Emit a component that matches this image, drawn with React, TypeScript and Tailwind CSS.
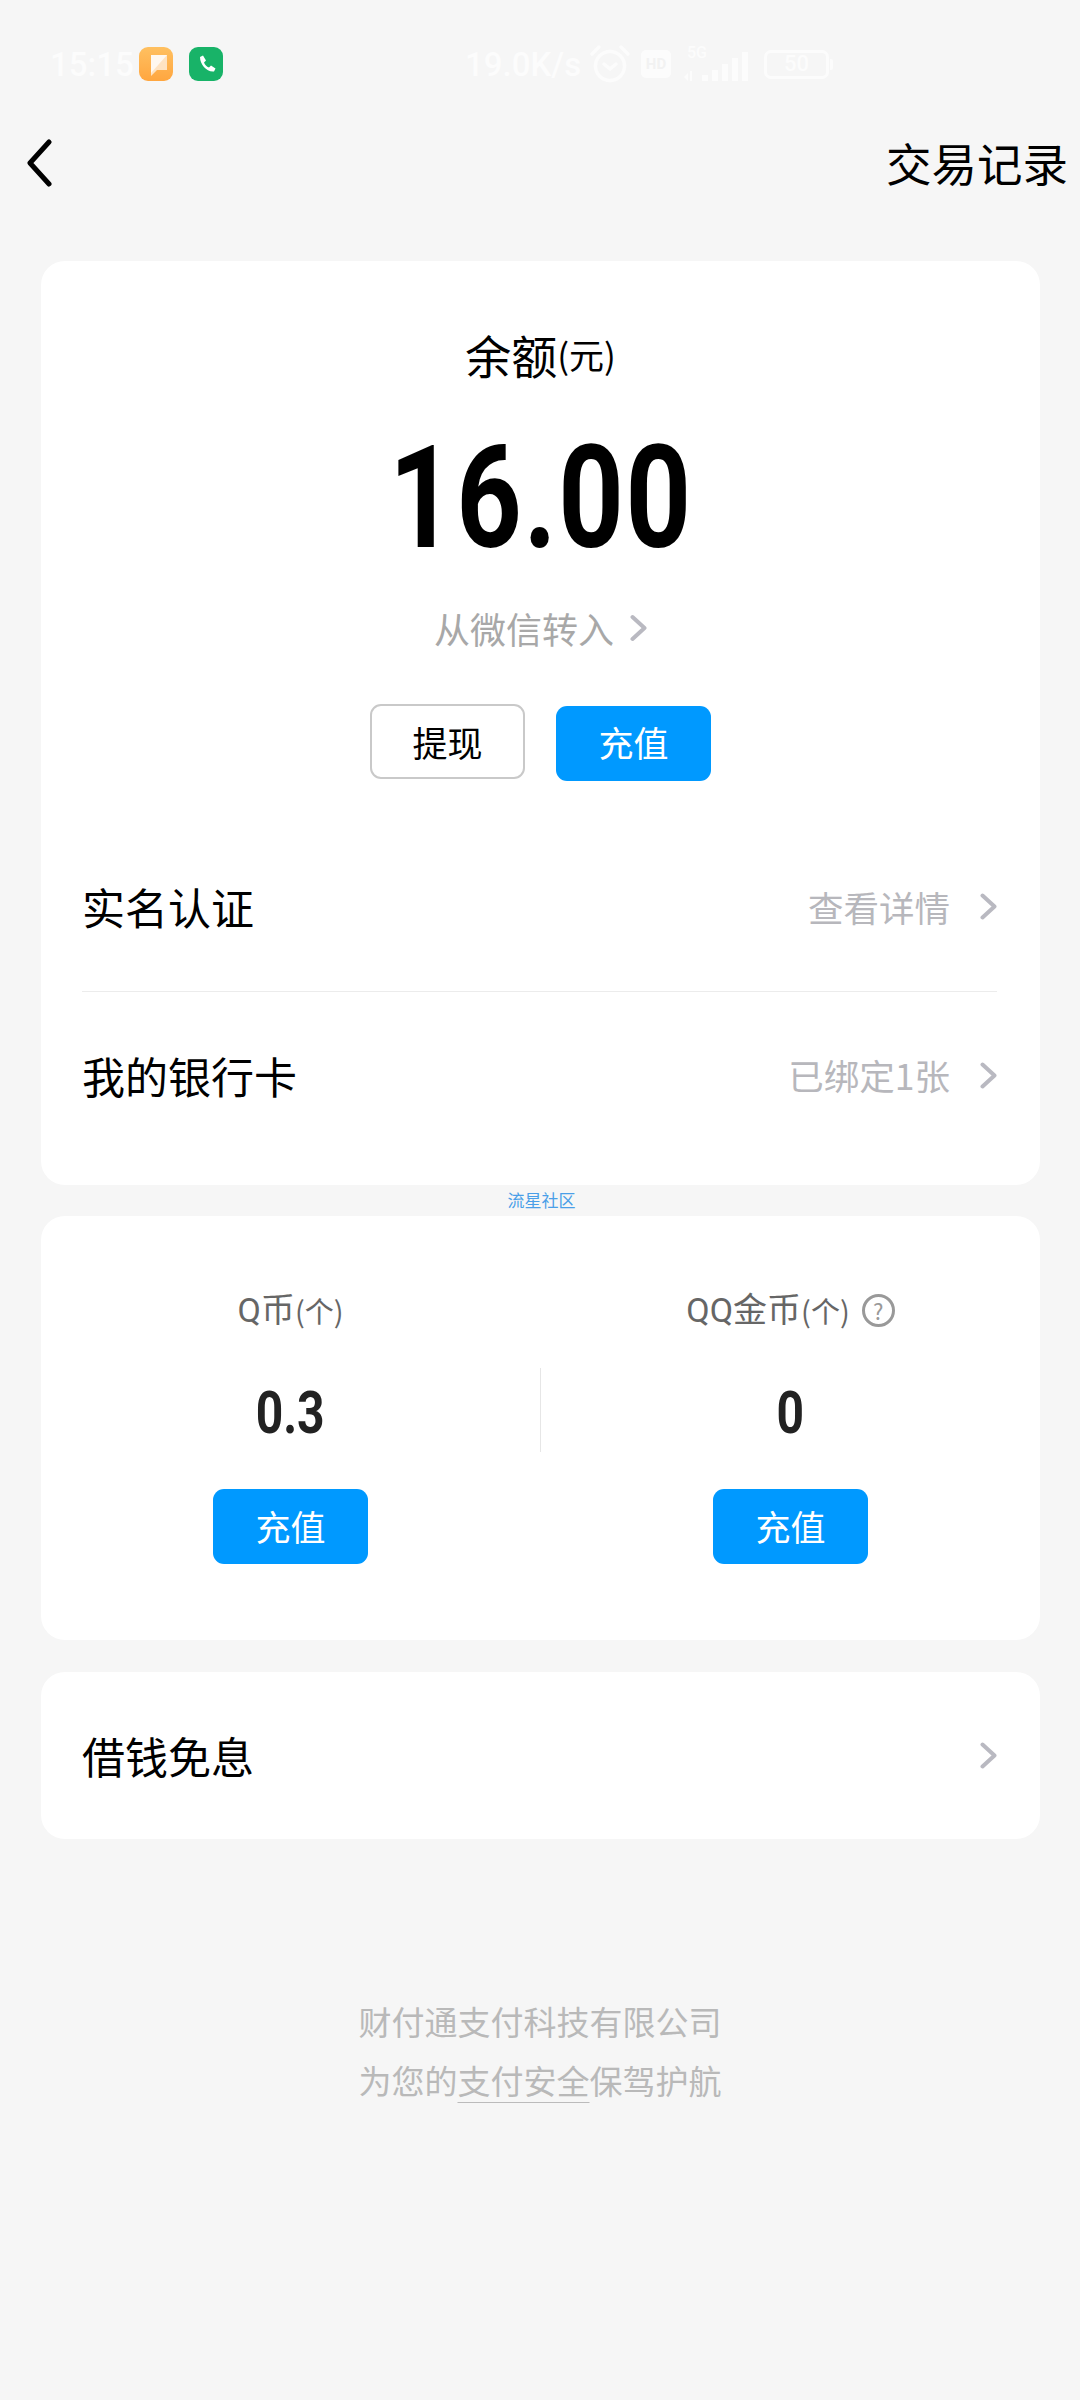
import React from 'react';

const CJK = 'font-["Noto_Sans_CJK_SC","Noto_Sans",sans-serif]';

const Chevron = ({ className = '' }: { className?: string }) => (
  <svg viewBox="0 0 17 27" className={className} fill="none" stroke="#b9b9c1" strokeWidth="4" strokeLinecap="round" strokeLinejoin="round">
    <polyline points="2.500,2.500 14.500,13.500 2.500,24.500" />
  </svg>
);

const BlueButton = () => (
  <button className="w-[155px] h-[75px] pb-[3px] rounded-[11px] bg-[#0099ff] text-white text-[35px] leading-none">充值</button>
);

const StatusBar = () => (
  <div className="h-[128px] flex items-center pl-[50px] text-[#fcfcfc] font-['Roboto',sans-serif] font-medium text-[33px]">
    <span className="w-[80px] leading-none">15:15</span>
    <div className="ml-[9px] w-[34px] h-[34px] rounded-[9px] bg-linear-to-b from-[#ffc060] to-[#ffa63f] flex items-center justify-center">
      <svg viewBox="0 0 34 34" className="w-[34px] h-[34px]">
        <path d="M12 8h16v15H18l-6 6z" fill="#ffe3c2" />
        <path d="M12 8h16L12 26z" fill="#fff8f0" />
      </svg>
    </div>
    <div className="ml-[16px] w-[34px] h-[34px] rounded-[9px] bg-[#18b368] flex items-center justify-center">
      <svg viewBox="0 0 34 34" className="w-[34px] h-[34px]">
        <path d="M11 10l3-1.500 3 5-2 2c1 2.500 2.500 4 5 5l2-2 4.500 3-1.500 3c-7 1-14-7-14-14.500z" fill="#fff" />
      </svg>
    </div>
    <span className="ml-[242px] w-[121px] leading-none whitespace-nowrap">19.0K/s</span>
    <svg viewBox="0 0 42 40" className="ml-[3px] w-[42px] h-[40px]" fill="none" stroke="#fcfcfc" strokeWidth="3.500" strokeLinecap="round">
      <circle cx="21" cy="22" r="14.500" />
      <path d="M15 20l6 5 6-5" />
      <path d="M3 10l7-7M39 10l-7-7" />
    </svg>
    <div className="ml-[10px] w-[30px] h-[28px] rounded-[5px] bg-[#fcfcfc] flex items-center justify-center text-[#f2f2f2] text-[15px] font-bold leading-none">HD</div>
    <div className="relative ml-[13px] w-[67px] h-[36px]">
      <span className="absolute left-[3px] -top-[1px] text-[16px] leading-none">5G</span>
      <svg viewBox="0 0 67 36" className="w-[67px] h-[36px]" fill="#fcfcfc">
        <path d="M0 31l4-4v8zM6 25h2v10H6z" />
        <rect x="18" y="29" width="6" height="6" />
        <rect x="28" y="24" width="6" height="11" />
        <rect x="38" y="18" width="6" height="17" />
        <rect x="48" y="12" width="6" height="23" />
        <rect x="58" y="6" width="6" height="29" />
      </svg>
    </div>
    <div className="ml-[13px] w-[65px] h-[29px] rounded-[7px] border-[3px] border-[#fcfcfc] flex items-center justify-center text-[22px] leading-none">50</div>
    <div className="ml-[1px] w-[3px] h-[11px] rounded-r-[2px] bg-[#fcfcfc]" />
  </div>
);

export default function App() {
  return (
    <div className={`w-[1080px] min-h-[2400px] bg-[#f6f6f6] ${CJK}`}>
      <StatusBar />

      {/* nav */}
      <div className="h-[70px] flex items-center justify-between pl-[26px] pr-[12px]">
        <svg viewBox="0 0 26 48" className="w-[26px] h-[48px]" fill="none" stroke="#000" strokeWidth="5" strokeLinecap="round" strokeLinejoin="round">
          <polyline points="23,3 4,24 23,45" />
        </svg>
        <span className="text-[45.500px] leading-[70px] text-black pb-[2px]">交易记录</span>
      </div>

      {/* balance card */}
      <div className="mt-[63px] mx-[41px] w-[999px] bg-white rounded-[24px] pt-[63px] pb-[23px]">
        <div className="h-[60px] flex items-center justify-center text-black">
          <span className="text-[46px] leading-[60px]">余额</span>
          <span className="text-[35px] leading-[60px]">(元)</span>
        </div>
        <div className="mt-[49px] h-[130px] flex items-center justify-center">
          <span className="font-['Roboto',sans-serif] font-bold text-[143px] leading-[130px] text-black scale-x-[0.8] tracking-[2px]">16.00</span>
        </div>
        <div className="mt-[40px] h-[50px] flex items-center justify-center text-[#a8a8a8]">
          <span className="text-[36px] leading-[50px]">从微信转入</span>
          <Chevron className="ml-[16px] w-[17px] h-[30px]" />
        </div>
        <div className="mt-[53px] h-[74px] flex items-center justify-center gap-[31px]">
          <button className="w-[155px] h-[75px] rounded-[11px] border-2 border-[#c9c9c9] text-black text-[35px] leading-none -mt-[3px]">提现</button>
          <BlueButton />
        </div>

        <div className="mt-[45px] ml-[41px] mr-[43px] h-[167px] pb-[3px] flex items-center justify-between border-b border-[#ececec]">
          <span className="text-[43px] text-black">实名认证</span>
          <div className="flex items-center">
            <span className="text-[35.500px] text-[#b7b7bc]">查看详情</span>
            <Chevron className="ml-[30px] w-[17px] h-[27px]" />
          </div>
        </div>
        <div className="ml-[41px] mr-[43px] h-[170px] pb-[4px] flex items-center justify-between">
          <span className="text-[43px] text-black">我的银行卡</span>
          <div className="flex items-center">
            <span className="text-[35.500px] text-[#b7b7bc]">已绑定1张</span>
            <Chevron className="ml-[30px] w-[17px] h-[27px]" />
          </div>
        </div>
      </div>

      {/* watermark */}
      <div className="h-[31px] pl-[3px] pb-[2px] flex items-center justify-center text-[17px] leading-none text-[#4a9fe8]">流星社区</div>

      {/* Q coin card */}
      <div className="mx-[41px] w-[999px] bg-white rounded-[24px] pt-[69px] pb-[76px] grid grid-cols-[1fr_1px_1fr]">
        <div className="flex flex-col items-center">
          <div className="h-[50px] flex items-center text-[#666]">
            <span className="font-['Roboto','Noto_Sans_CJK_SC',sans-serif] text-[34px] leading-[50px]">Q币</span>
            <span className="text-[29px] leading-[50px]">(个)</span>
          </div>
          <div className="mt-[38px] h-[80px] font-['Roboto',sans-serif] font-bold text-[60px] leading-[80px] text-[#222] scale-x-[0.8]">0.3</div>
          <div className="mt-[36px]"><BlueButton /></div>
        </div>
        <div className="mt-[83px] h-[84px] bg-[#e6e6e6]" />
        <div className="flex flex-col items-center">
          <div className="h-[50px] flex items-center text-[#666]">
            <span className="font-['Roboto','Noto_Sans_CJK_SC',sans-serif] text-[34px] leading-[50px]">QQ金币</span>
            <span className="text-[29px] leading-[50px]">(个)</span>
            <span className="ml-[12px] w-[33px] h-[33px] rounded-full border-[3px] border-[#999] flex items-center justify-center text-[22px] leading-none text-[#999]">?</span>
          </div>
          <div className="mt-[38px] h-[80px] font-['Roboto',sans-serif] font-bold text-[60px] leading-[80px] text-[#222] scale-x-[0.8]">0</div>
          <div className="mt-[36px]"><BlueButton /></div>
        </div>
      </div>

      {/* loan card */}
      <div className="mt-[32px] mx-[41px] w-[999px] h-[167px] pb-[1px] bg-white rounded-[24px] pl-[41px] pr-[43px] flex items-center justify-between">
        <span className="text-[43px] text-black">借钱免息</span>
        <Chevron className="w-[17px] h-[27px]" />
      </div>

      {/* footer */}
      <div className="mt-[153px] flex flex-col items-center text-[33px] leading-[59px] text-[#b9b9b9]">
        <div>财付通支付科技有限公司</div>
        <div>
          为您的<span className="underline decoration-[#bbb] decoration-1 underline-offset-[8px] [text-decoration-skip-ink:none]">支付安全</span>保驾护航
        </div>
      </div>
    </div>
  );
}
